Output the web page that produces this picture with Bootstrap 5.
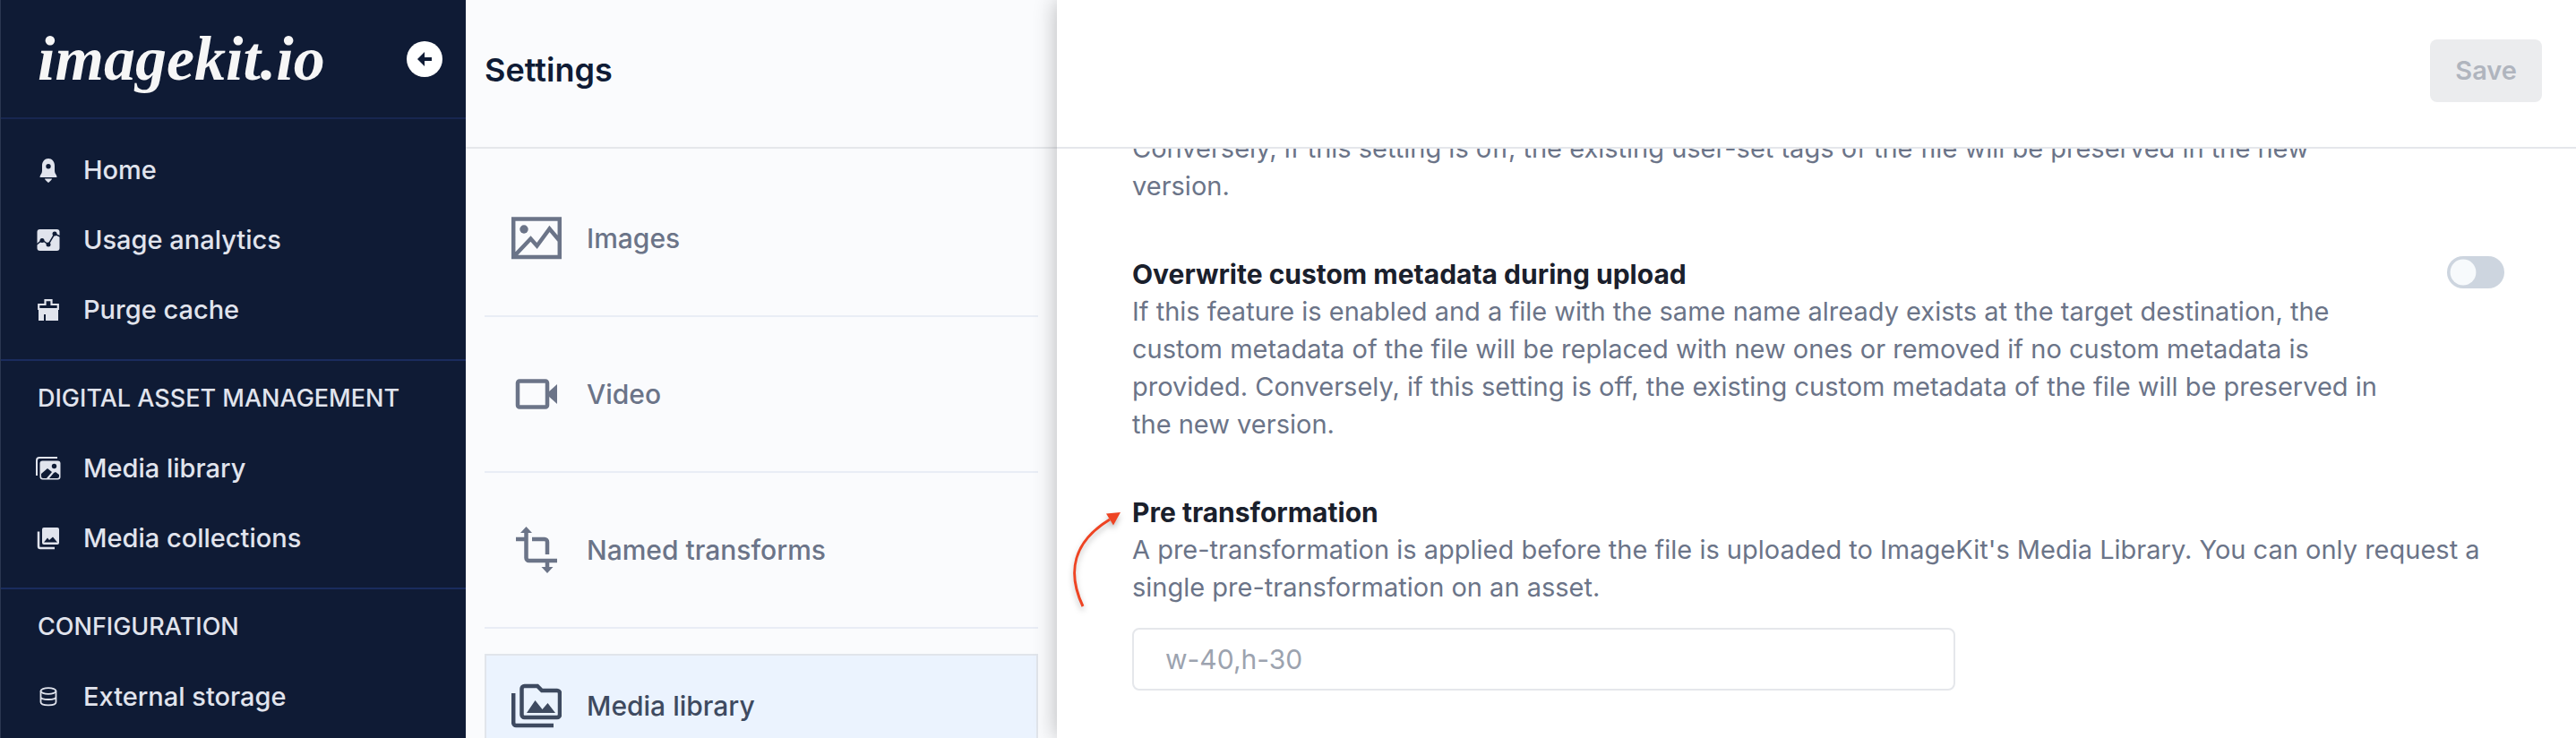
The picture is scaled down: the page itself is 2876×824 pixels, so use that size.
<!DOCTYPE html>
<html lang="en">
<head>
<meta charset="utf-8">
<title>Settings</title>
<meta name="viewport" content="width=device-width, initial-scale=1">
<link href="https://cdn.jsdelivr.net/npm/bootstrap@5.3.0/dist/css/bootstrap.min.css" rel="stylesheet">
<style>
body{font-family:Inter,"Noto Sans",sans-serif;font-size:29px;line-height:42px;color:#6b7488;background:#fff}
.app{height:100vh;overflow:hidden}
.side{flex:0 0 520px;background:#0f1b35;color:#e1e4ed;font-weight:500;border-left:1px solid #2a3650}
.side-top{height:133px;border-bottom:2px solid #172650;padding:0 26px 0 41px}
.logo{font:italic bold 70px/90px "Liberation Serif",serif;color:#f6f6f6}
.back{width:40px;height:40px;background:#fff;border:0}
.group{border-bottom:2px solid #1a2c5e;padding-bottom:16px}
.group.first{padding-top:18px}
.side a{color:inherit;text-decoration:none;height:78px;padding-left:39px;gap:25px}
.side svg{width:28px;height:28px;flex:none}
.side h2{font-size:27px;line-height:42px;font-weight:500;margin:0;padding:21px 41px 18px}
.subnav{flex:0 0 660px;background:#fafbfd}
.topbar{height:166px;border-bottom:2px solid #e5e7eb;flex:none;padding:0 38px 6px 21px}
.subnav h1{font-size:36px;font-weight:600;color:#0f1b35;margin:0}
.subnav .entries{padding:14px 21px 0}
.entry{border-bottom:2px solid #e9edf5;height:174px;padding:28px 0}
.entry a{height:100%;color:#6b7488;font-size:30px;font-weight:500;text-decoration:none;padding-left:28px;gap:28px;border:2px solid transparent}
.entry a.active{background:#ebf3fe;border-color:#e1e5eb;color:#3e4a60}
.entry svg{width:56px;height:56px;flex:none}
.pane{box-shadow:0 0 24px rgba(0,0,0,.28);z-index:1;background:#fff;min-width:0}
.save,.save:disabled{background:#ebecee;color:#b0b5be;font-weight:600;border:0;border-radius:8px;padding:14px 28px;opacity:1}
.scroller{padding:0 80px 0 84px;overflow:hidden}
.setting{margin-bottom:56px}
.setting p{margin:0}
.setting label.title{font-size:30px;line-height:42px;font-weight:700;color:#1a202c;display:block}
.scrolled{margin-top:-21px}
.form-switch .form-check-input{width:64px;height:36px;margin:1px 0 0;border:0;background-color:#cdd5df;background-image:url("data:image/svg+xml,%3csvg xmlns='http://www.w3.org/2000/svg' viewBox='-4 -4 8 8'%3e%3ccircle r='3.2' fill='%23f7fafc'/%3e%3c/svg%3e")}
.field{width:60%;height:70px;border:2px solid #e5e7eb;border-radius:8px;font-size:30px;padding:0 35px;margin-top:24px}
.field::placeholder{color:#9ca3af}
.pointer{position:absolute;left:-72px;top:12px;width:64px;height:124px;filter:drop-shadow(0 4px 3px rgba(0,0,0,.25))}
</style>
</head>
<body>
<div class="app d-flex">
  <nav class="side" aria-label="Main">
    <div class="side-top d-flex align-items-center justify-content-between">
      <span class="logo">imagekit.io</span>
      <button class="back rounded-circle p-0 d-flex align-items-center justify-content-center" aria-label="Collapse menu">
        <svg viewBox="0 0 28 28"><path d="M6 14l8-8v6h8v4h-8v6z" fill="#0f1b35"/></svg>
      </button>
    </div>
    <div class="group first">
      <a class="d-flex align-items-center" href="#"><svg viewBox="0 0 28 28" fill="currentColor"><path fill-rule="evenodd" d="M14 1C10 1 7 4.500 7 9v6c0 3-2.500 4-2.500 7h19c0-3-2.500-4-2.500-7V9c0-4.500-3-8-7-8zM14 7a2.700 2.700 0 1 1 0 5.400A2.700 2.700 0 0 1 14 7zM10 23.500h8c0 1.500-2 2.500-4 4.500-2-2-4-3-4-4.500z"/></svg>Home</a>
      <a class="d-flex align-items-center" href="#"><svg viewBox="0 0 28 28"><rect x="1.500" y="2" width="25" height="24" rx="3" fill="currentColor"/><path d="M1 19l6-5 7 5 7-12 6 3" fill="none" stroke="#0f1b35" stroke-width="1.500"/><g fill="#0f1b35"><circle cx="7" cy="14.500" r="2.500"/><circle cx="14" cy="19" r="2.500"/><circle cx="21" cy="7" r="2.500"/></g></svg>Usage analytics</a>
      <a class="d-flex align-items-center" href="#"><svg viewBox="0 0 28 28"><path d="M3 14v12h6v-7h2v7h14V14z" fill="currentColor"/><path d="M3.200 13V8h7.300V3.200h7V8h7.300v5z" fill="#0f1b35" stroke="currentColor" stroke-width="2.200"/></svg>Purge cache</a>
    </div>
    <div class="group">
      <h2>DIGITAL ASSET MANAGEMENT</h2>
      <a class="d-flex align-items-center" href="#"><svg viewBox="0 0 28 28"><path d="M1 22V5a3 3 0 0 1 3-3h20" fill="none" stroke="currentColor" stroke-width="2"/><rect x="4.500" y="5.500" width="23" height="21" rx="3" fill="currentColor"/><g fill="#0f1b35"><circle cx="20.500" cy="11.500" r="2.700"/><path d="M6 20l7-6 5 4-6 7H8a2 2 0 0 1-2-2zM15 25l5-6 2-1 4 3v2a2 2 0 0 1-2 2z"/></g></svg>Media library</a>
      <a class="d-flex align-items-center" href="#"><svg viewBox="0 0 28 28"><path d="M3 6.500V23a2 2 0 0 0 2 2h16" fill="none" stroke="currentColor" stroke-width="2.500"/><rect x="7" y="2" width="19" height="19" rx="2" fill="currentColor"/><path d="M9 18.500l4-5 2 2.500 4-3.500 5 6z" fill="#0f1b35"/></svg>Media collections</a>
    </div>
    <div>
      <h2>CONFIGURATION</h2>
      <a class="d-flex align-items-center" href="#"><svg viewBox="0 0 28 28" fill="none" stroke="currentColor" stroke-width="1.800"><ellipse cx="14" cy="7.500" rx="8.500" ry="3.300"/><path d="M5.500 7.500V20c0 4.400 17 4.400 17 0V7.500M5.500 14c0 4 17 4 17 0"/></svg>External storage</a>
    </div>
  </nav>

  <section class="subnav">
    <div class="topbar d-flex align-items-center"><h1>Settings</h1></div>
    <div class="entries">
      <div class="entry"><a class="d-flex align-items-center" href="#"><svg viewBox="0 0 56 56"><path d="M2.200 6.500h51.600v42.500H2.200z M4 47l17.500-18.500 7 8 14-19 11 13" fill="none" stroke="currentColor" stroke-width="4.500"/><circle cx="14" cy="18" r="4.700" fill="currentColor"/></svg>Images</a></div>
      <div class="entry"><a class="d-flex align-items-center" href="#"><svg viewBox="0 0 56 56"><rect x="7" y="13.500" width="33" height="29" rx="2" fill="none" stroke="currentColor" stroke-width="4.500"/><path d="M41 26l10-9v22l-10-9z" fill="currentColor"/></svg>Video</a></div>
      <div class="entry"><a class="d-flex align-items-center" href="#"><svg viewBox="0 0 56 56"><path d="M5 16h11.500M16.500 8v29a3 3 0 0 0 3 3H51M23 16h14a3 3 0 0 1 3 3v14M40 40v8" fill="none" stroke="currentColor" stroke-width="4.500"/><path d="M10 9l6.500-7L23 9zM33.500 47l6.500 7 6.500-7z" fill="currentColor"/></svg>Named transforms</a></div>
      <div class="entry"><a class="active d-flex align-items-center" href="#" aria-current="page"><svg viewBox="0 0 56 56"><path d="M2.200 14v33a3 3 0 0 0 3 3H47" fill="none" stroke="currentColor" stroke-width="4.500"/><path d="M14.500 6H29l5 5h17a3 3 0 0 1 3 3v24a3 3 0 0 1-3 3H14.500a3 3 0 0 1-3-3V9a3 3 0 0 1 3-3z" fill="none" stroke="currentColor" stroke-width="4.500"/><path d="M17 36l9.500-14 8 10 6-7L49 36z" fill="currentColor"/></svg>Media library</a></div>
    </div>
  </section>

  <main class="pane flex-grow-1 d-flex flex-column">
    <div class="topbar d-flex align-items-center justify-content-end"><button class="save" disabled>Save</button></div>
    <div class="scroller flex-grow-1">
      <div class="setting scrolled">
        <p>Conversely, if this setting is off, the existing user-set tags of the file will be preserved in the new<br>version.</p>
      </div>
      <div class="setting d-flex justify-content-between">
        <div>
          <label class="title" for="overwrite-meta">Overwrite custom metadata during upload</label>
          <p>If this feature is enabled and a file with the same name already exists at the target destination, the<br>custom metadata of the file will be replaced with new ones or removed if no custom metadata is<br>provided. Conversely, if this setting is off, the existing custom metadata of the file will be preserved in<br>the new version.</p>
        </div>
        <div class="form-switch p-0"><input class="form-check-input float-none" type="checkbox" role="switch" id="overwrite-meta"></div>
      </div>
      <div class="setting position-relative">
        <svg class="pointer" viewBox="0 0 64 124"><path d="M17 114C-1 76 6 42 47 17" fill="none" stroke="#ee4423" stroke-width="3"/><path d="M59 9l-16 1.500 8 13z" fill="#ee4423"/></svg>
        <label class="title" for="pre-transform">Pre transformation</label>
        <p>A pre-transformation is applied before the file is uploaded to ImageKit's Media Library. You can only request a<br>single pre-transformation on an asset.</p>
        <input class="field d-block" id="pre-transform" type="text" placeholder="w-40,h-30">
      </div>
    </div>
  </main>
</div>
<script src="https://cdn.jsdelivr.net/npm/bootstrap@5.3.0/dist/js/bootstrap.bundle.min.js"></script>
</body>
</html>
